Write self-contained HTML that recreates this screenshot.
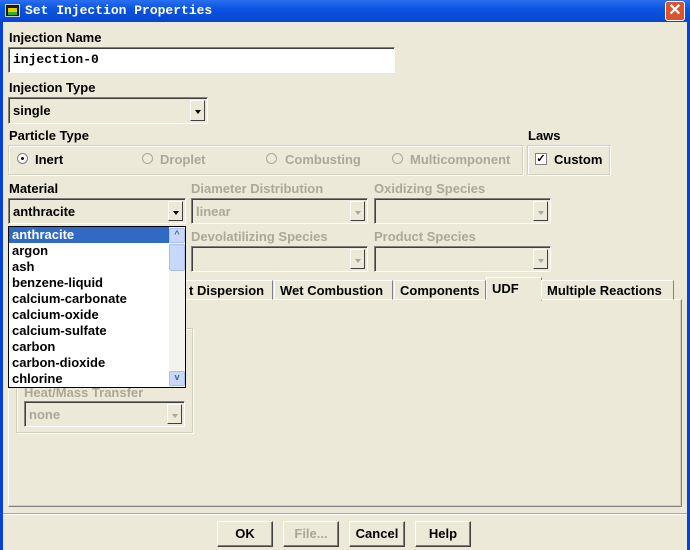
<!DOCTYPE html><html><head><style>
*{box-sizing:border-box;margin:0;padding:0}
body{width:690px;height:550px;overflow:hidden;background:#0841d8;font-family:"Liberation Sans",Arial,sans-serif;font-weight:bold;font-size:13px;color:#000;position:relative}
.a{position:absolute}
#tb{left:0;top:0;width:690px;height:22px;background:linear-gradient(#2a6ff0,#0a54e0 40%,#0846d0);}
#cl{left:3px;top:22px;width:684px;height:528px;background:#ece9d8}
.lbl{position:absolute;white-space:nowrap;line-height:14px}
.dis{color:#aca899}
.sunk{position:absolute;border:1px solid;border-color:#808080 #fff #fff #808080;box-shadow:inset 1px 1px 0 #404040}
.grp{position:absolute;border:1px solid #d0d0bf;box-shadow:1px 1px 0 #fff inset, 1px 1px 0 #fff}
.arr{position:absolute;right:2px;top:2px;bottom:2px;width:15px;background:#ece9d8;border:1px solid;border-color:#fff #404040 #404040 #fff}
.arr:after{content:"";position:absolute;left:4px;top:9px;border:3px solid transparent;border-top:4px solid #000;border-bottom:0}
.arr.d:after{border-top-color:#aca899}
.rad{position:absolute;width:11px;height:11px;border-radius:50%;border:1px solid #aca899;background:#ece9d8}
.tab{position:absolute;top:280px;height:20px;border:1px solid;border-color:#fff #808080 transparent #fff;padding:2px 5px;white-space:nowrap}
.btn{position:absolute;top:521px;height:26px;border:1px solid;border-color:#fff #404040 #404040 #fff;box-shadow:inset -1px -1px 0 #808080;text-align:center;line-height:23px}
.row{height:16px;line-height:16px;padding-left:3px}
</style></head><body>
<div id="tb" class="a">
<div class="a" style="left:5px;top:4px;width:15px;height:13px;background:#1a1a1a;border:1px solid #ccc"><div class="a" style="left:2px;top:3px;width:9px;height:5px;background:#e8d000"></div><div class="a" style="left:2px;top:7px;width:9px;height:3px;background:#30b030"></div></div>
<div class="a" style="left:25px;top:3px;color:#fff;font-family:'Liberation Mono',monospace;font-size:13px;font-weight:bold">Set Injection Properties</div>
<div class="a" style="left:665px;top:1px;width:20px;height:20px;background:#d9532f;border:1px solid #fff;border-radius:3px;color:#fff;text-align:center;line-height:18px;font-size:16px">✕</div>
</div>
<div id="cl" class="a"></div>
<div class="lbl" style="left:9px;top:31px">Injection Name</div>
<div class="sunk" style="left:8px;top:47px;width:387px;height:26px;background:#fff"><span class="a" style="left:4px;top:4px;font-family:'Liberation Mono',monospace;font-size:13px">injection-0</span></div>
<div class="lbl" style="left:9px;top:81px">Injection Type</div>
<div class="sunk" style="left:8px;top:97px;width:200px;height:27px"><span class="a" style="left:4px;top:5px">single</span><div class="arr"></div></div>
<div class="lbl" style="left:9px;top:129px">Particle Type</div>
<div class="grp" style="left:8px;top:145px;width:515px;height:30px"></div>
<div class="rad" style="left:17px;top:153px;border-color:#808080;background:#fff"><div class="a" style="left:3px;top:3px;width:3px;height:3px;background:#000;border-radius:50%"></div></div>
<div class="lbl" style="left:35px;top:153px">Inert</div>
<div class="rad" style="left:142px;top:153px"></div><div class="lbl dis" style="left:160px;top:153px">Droplet</div>
<div class="rad" style="left:266px;top:153px"></div><div class="lbl dis" style="left:285px;top:153px">Combusting</div>
<div class="rad" style="left:392px;top:153px"></div><div class="lbl dis" style="left:410px;top:153px">Multicomponent</div>
<div class="lbl" style="left:528px;top:129px">Laws</div>
<div class="grp" style="left:527px;top:145px;width:83px;height:30px"></div>
<div class="a" style="left:535px;top:153px;width:12px;height:12px;border:1px solid #808080;background:#fff;font-size:11px;line-height:10px;text-align:center">✓</div>
<div class="lbl" style="left:554px;top:153px">Custom</div>
<div class="lbl" style="left:9px;top:182px">Material</div>
<div class="sunk" style="left:8px;top:198px;width:178px;height:26px"><span class="a" style="left:4px;top:5px">anthracite</span><div class="arr"></div></div>
<div class="lbl dis" style="left:191px;top:182px">Diameter Distribution</div>
<div class="sunk" style="left:191px;top:198px;width:177px;height:26px"><span class="a dis" style="left:4px;top:5px">linear</span><div class="arr d"></div></div>
<div class="lbl dis" style="left:374px;top:182px">Oxidizing Species</div>
<div class="sunk" style="left:374px;top:198px;width:177px;height:26px"><div class="arr d"></div></div>
<div class="lbl dis" style="left:191px;top:230px">Devolatilizing Species</div>
<div class="sunk" style="left:191px;top:246px;width:177px;height:26px"><div class="arr d"></div></div>
<div class="lbl dis" style="left:374px;top:230px">Product Species</div>
<div class="sunk" style="left:374px;top:246px;width:177px;height:26px"><div class="arr d"></div></div>
<div class="a" style="left:8px;top:299px;width:674px;height:208px;border:1px solid;border-color:#fff #808080 #808080 #fff;box-shadow:inset -1px -1px 0 #d0d0bf"></div>
<div class="tab" style="left:150px;width:123px;padding-left:38px">t Dispersion</div>
<div class="tab" style="left:274px;width:119px">Wet Combustion</div>
<div class="tab" style="left:394px;width:92px">Components</div>
<div class="tab" style="left:486px;top:277px;height:24px;width:56px;background:#ece9d8;font-weight:normal;padding-top:3px"><b>UDF</b></div>
<div class="tab" style="left:541px;width:133px">Multiple Reactions</div>
<div class="grp" style="left:16px;top:328px;width:177px;height:105px"></div>
<div class="lbl dis" style="left:24px;top:386px">Heat/Mass Transfer</div>
<div class="sunk" style="left:24px;top:401px;width:161px;height:26px"><span class="a dis" style="left:4px;top:5px">none</span><div class="arr d"></div></div>
<div class="a" style="left:8px;top:226px;width:178px;height:162px;border:1px solid #000;background:#fff">
<div class="row" style="background:#316ac5;color:#fff;width:160px">anthracite</div>
<div class="row">argon</div><div class="row">ash</div><div class="row">benzene-liquid</div><div class="row">calcium-carbonate</div><div class="row">calcium-oxide</div><div class="row">calcium-sulfate</div><div class="row">carbon</div><div class="row">carbon-dioxide</div><div class="row">chlorine</div>
<div class="a" style="left:160px;top:0;width:16px;height:160px;background:#f4f3ee"></div>
<div class="a" style="left:160px;top:1px;width:16px;height:15px;background:#c8d8fa;border:1px solid #a8bff0;border-radius:2px;font-size:9px;text-align:center;color:#4d6185">^</div>
<div class="a" style="left:160px;top:17px;width:16px;height:27px;background:#c8d8fa;border:1px solid #a8bff0;border-radius:2px"></div>
<div class="a" style="left:160px;top:144px;width:16px;height:15px;background:#c8d8fa;border:1px solid #a8bff0;border-radius:2px;font-size:9px;text-align:center;color:#4d6185">v</div>
</div>
<div class="a" style="left:3px;top:513px;width:684px;height:2px;border-top:1px solid #aca899;border-bottom:1px solid #fff"></div>
<div class="btn" style="left:217px;width:56px">OK</div>
<div class="btn dis" style="left:283px;width:56px">File...</div>
<div class="btn" style="left:349px;width:56px">Cancel</div>
<div class="btn" style="left:415px;width:56px">Help</div>
</body></html>
